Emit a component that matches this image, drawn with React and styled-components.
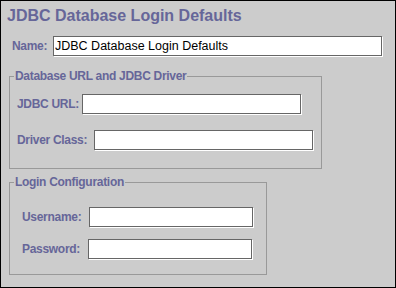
import React from 'react';
import styled, { createGlobalStyle } from 'styled-components';

const GlobalStyle = createGlobalStyle`
  html, body {
    margin: 0;
    padding: 0;
    background: #cccccc;
  }
  * {
    box-sizing: border-box;
  }
`;

// Styled Components
const Panel = styled.div`
  width: 396px;
  height: 288px;
  border: 1px solid #000;
  background: #cccccc;
  padding: 5px 0 0 6px;
  display: flex;
  flex-direction: column;
  font-family: "Liberation Sans", Arial, sans-serif;
  color: #666699;
`;

const Title = styled.h1`
  margin: 0;
  font-size: 16px;
  line-height: 20px;
  font-weight: bold;
`;

const Row = styled.div`
  display: flex;
  align-items: center;
  height: 20px;
  margin-left: ${props => props.$indent}px;
  margin-top: ${props => props.$top || 0}px;
`;

const Label = styled.label`
  width: ${props => props.$w}px;
  flex: none;
  font-size: 12px;
  line-height: 14px;
  font-weight: bold;
  letter-spacing: -0.3px;
  white-space: nowrap;
`;

const Field = styled.input`
  width: ${props => props.$w}px;
  height: 20px;
  flex: none;
  margin: 0;
  padding: 0 0 0 1px;
  border: 1px solid #666666;
  border-radius: 0;
  box-shadow: 1px 1px 0 #ffffff;
  background: #fff;
  font-family: "Liberation Sans", Arial, sans-serif;
  font-size: 12.5px;
  color: #000;
  outline: none;
`;

const Group = styled.fieldset`
  width: ${props => props.$w}px;
  margin: ${props => props.$top}px 0 0 2px;
  padding: ${props => props.$pt}px 0 ${props => props.$pb}px 4px;
  border: 1px solid #999999;
  min-width: 0;
`;

const Legend = styled.legend`
  padding: 0 1px;
  margin: 0;
  font-size: 12px;
  line-height: 13px;
  font-weight: bold;
  letter-spacing: -0.3px;
  white-space: nowrap;
`;

const App = () => {
  return (
    <>
      <GlobalStyle />
      <Panel>
        <Title>JDBC Database Login Defaults</Title>
        <Row $indent={5} $top={10}>
          <Label $w={41}>Name:</Label>
          <Field $w={329} defaultValue="JDBC Database Login Defaults" />
        </Row>

        <Group $w={313} $top={14} $pt={11} $pb={18}>
          <Legend>Database URL and JDBC Driver</Legend>
          <Row $indent={3}>
            <Label $w={65}>JDBC URL:</Label>
            <Field $w={219} />
          </Row>
          <Row $indent={3} $top={16}>
            <Label $w={77}>Driver Class:</Label>
            <Field $w={219} />
          </Row>
        </Group>

        <Group $w={258} $top={7} $pt={18} $pb={15}>
          <Legend>Login Configuration</Legend>
          <Row $indent={8}>
            <Label $w={67}>Username:</Label>
            <Field $w={164} />
          </Row>
          <Row $indent={8} $top={12}>
            <Label $w={66}>Password:</Label>
            <Field $w={164} />
          </Row>
        </Group>
      </Panel>
    </>
  );
};

export default App;
